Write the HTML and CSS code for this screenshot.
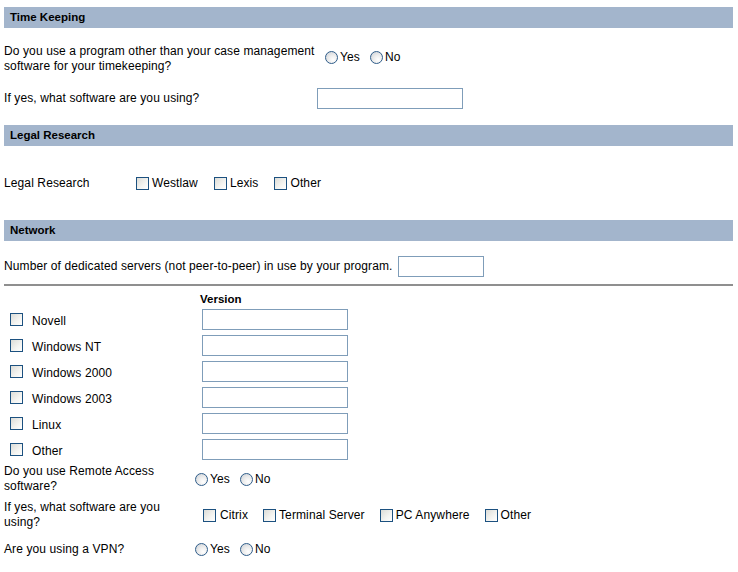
FILE: index.html
```html
<!DOCTYPE html>
<html>
<head>
<meta charset="utf-8">
<link rel="stylesheet" href="styles.css">
</head>
<body>
<div class="page">
  <div class="section-head">Time Keeping</div>
  <div class="row q1">
    <div class="lbl w-tk">Do you use a program other than your case management software for your timekeeping?</div>
    <div class="ctrls">
      <label class="opt"><input type="radio" name="tk"><span>Yes</span></label>
      <label class="opt"><input type="radio" name="tk"><span>No</span></label>
    </div>
  </div>
  <div class="row q2">
    <div class="lbl w-tk2">If yes, what software are you using?</div>
    <input type="text" class="txt w146">
  </div>

  <div class="section-head sh2">Legal Research</div>
  <div class="row legal">
    <div class="lbl w-legal">Legal Research</div>
    <div class="ctrls wide">
      <label class="opt cb"><input type="checkbox"><span>Westlaw</span></label>
      <label class="opt cb"><input type="checkbox"><span>Lexis</span></label>
      <label class="opt cb"><input type="checkbox"><span>Other</span></label>
    </div>
  </div>

  <div class="section-head sh3">Network</div>
  <div class="row servers">
    <div class="lbl">Number of dedicated servers (not peer-to-peer) in use by your program.</div>
    <input type="text" class="txt w86">
  </div>
  <div class="rule"></div>
  <div class="version-row"><span class="version">Version</span></div>
  <div class="os-list">
    <div class="os"><label class="os-lbl"><input type="checkbox"><span>Novell</span></label><input type="text" class="txt w146"></div>
    <div class="os"><label class="os-lbl"><input type="checkbox"><span>Windows NT</span></label><input type="text" class="txt w146"></div>
    <div class="os"><label class="os-lbl"><input type="checkbox"><span>Windows 2000</span></label><input type="text" class="txt w146"></div>
    <div class="os"><label class="os-lbl"><input type="checkbox"><span>Windows 2003</span></label><input type="text" class="txt w146"></div>
    <div class="os"><label class="os-lbl"><input type="checkbox"><span>Linux</span></label><input type="text" class="txt w146"></div>
    <div class="os"><label class="os-lbl"><input type="checkbox"><span>Other</span></label><input type="text" class="txt w146"></div>
  </div>
  <div class="row net remote">
    <div class="lbl w-net">Do you use Remote Access software?</div>
    <div class="ctrls">
      <label class="opt"><input type="radio" name="ra"><span>Yes</span></label>
      <label class="opt"><input type="radio" name="ra"><span>No</span></label>
    </div>
  </div>
  <div class="row net rsw">
    <div class="lbl w-net">If yes, what software are you using?</div>
    <div class="ctrls wide soft">
      <label class="opt cb gap4"><input type="checkbox"><span>Citrix</span></label>
      <label class="opt cb"><input type="checkbox"><span>Terminal Server</span></label>
      <label class="opt cb"><input type="checkbox"><span>PC Anywhere</span></label>
      <label class="opt cb"><input type="checkbox"><span>Other</span></label>
    </div>
  </div>
  <div class="row net vpn">
    <div class="lbl w-net">Are you using a VPN?</div>
    <div class="ctrls">
      <label class="opt"><input type="radio" name="vpn"><span>Yes</span></label>
      <label class="opt"><input type="radio" name="vpn"><span>No</span></label>
    </div>
  </div>
</div>
</body>
</html>
```

FILE: styles.css
```css
html, body {
  margin: 0;
  padding: 0;
  background: #ffffff;
}
body {
  font-family: "Liberation Sans", Arial, sans-serif;
  font-size: 12px;
  letter-spacing: 0.11px;
  color: #000000;
}
.page {
  padding: 7px 5px 0 4px;
  width: 729px;
}
.section-head {
  height: 21px;
  line-height: 21px;
  background: #a3b5cc;
  font-weight: bold;
  font-size: 11.5px;
  letter-spacing: 0;
  padding-left: 6px;
  box-sizing: border-box;
}
.sh2 { margin-top: 13px; }
.sh3 { margin-top: 20px; }

.row {
  display: flex;
  align-items: center;
}
.lbl {
  line-height: 15px;
}
.q1 { height: 34px; margin-top: 12px; }
.q1 .lbl { padding-top: 4px; }
.w-tk { width: 318px; padding-right: 3px; }
.q2 { height: 28px; margin-top: 10px; }
.w-tk2 { width: 313px; }

.legal { height: 34px; margin-top: 20px; }
.w-legal { width: 132px; }

.servers { height: 29px; margin-top: 11px; }
.servers .lbl { margin-right: 5px; }

.ctrls {
  display: flex;
  align-items: center;
  gap: 10px;
}
.ctrls.wide { gap: 16px; }
.ctrls.soft { gap: 15px; }

.opt {
  display: inline-flex;
  align-items: center;
  gap: 2px;
}
.opt.cb { gap: 3px; }
.opt.gap4 { gap: 4px; }

input[type="radio"], input[type="checkbox"] {
  -webkit-appearance: none;
  appearance: none;
  margin: 0;
  width: 13px;
  height: 13px;
  box-sizing: border-box;
  border: 1px solid #1c5180;
  background: linear-gradient(135deg, #dcdcd7 0%, #f4f4f1 60%, #ffffff 100%);
  flex: none;
}
input[type="radio"] {
  border-radius: 50%;
  border-color: #2f5d8a;
  background: radial-gradient(circle at 65% 70%, #ffffff 0%, #ececec 45%, #c8cdd3 100%);
}

.txt {
  height: 21px;
  box-sizing: border-box;
  border: 1px solid #7f9db9;
  margin: 0;
  padding: 0 2px;
  font-family: inherit;
  font-size: 12px;
  background: #ffffff;
}
.w146 { width: 146px; }
.w86 { width: 86px; }

.rule {
  height: 2px;
  background: #8f8f8f;
  margin-top: 3px;
}
.version-row {
  height: 20px;
  display: flex;
  align-items: center;
  padding-left: 196px;
  margin-top: 3px;
}
.version {
  font-weight: bold;
  font-size: 11.5px;
  letter-spacing: 0;
}
.os-list {
  display: flex;
  flex-direction: column;
  gap: 5px;
  margin-top: 0;
}
.os {
  display: flex;
  align-items: center;
  height: 21px;
}
.os-lbl {
  display: inline-flex;
  align-items: center;
  gap: 9px;
  width: 198px;
  padding-left: 6px;
  padding-top: 2px;
  box-sizing: border-box;
}
.os-lbl input { position: relative; top: -1px; }

.net .w-net { width: 191px; padding-right: 16px; box-sizing: border-box; }
.remote { height: 32px; margin-top: 3px; }
.rsw { height: 32px; margin-top: 4px; }
.rsw .soft { padding-left: 8px; }
.vpn { height: 24px; margin-top: 6px; }
```
